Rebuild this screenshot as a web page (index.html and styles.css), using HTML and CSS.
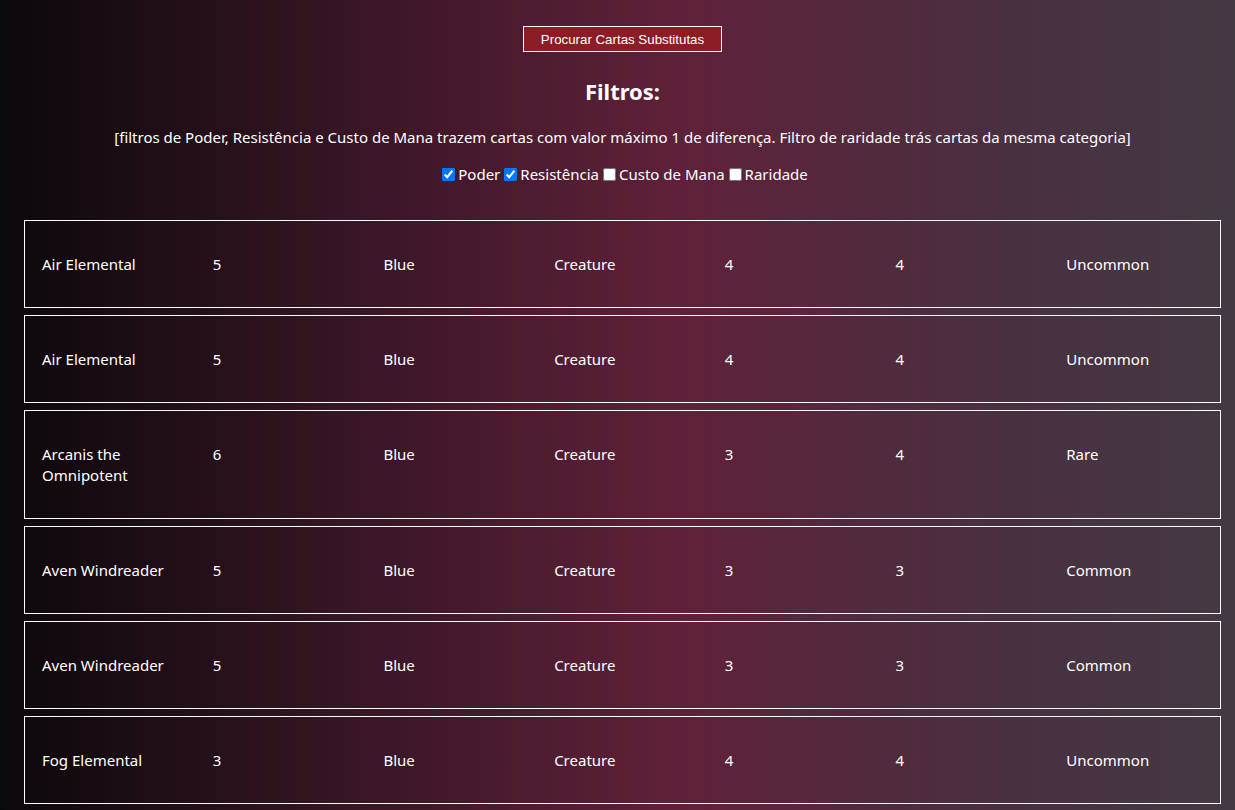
FILE: index.html
```html
<!DOCTYPE html>
<html lang="pt">
<head>
<meta charset="utf-8">
<title>Cartas Substitutas</title>
<link rel="stylesheet" href="styles.css">
</head>
<body>
<main class="page">
  <div class="actions">
    <button class="search-btn" type="button">Procurar Cartas Substitutas</button>
  </div>
  <h2 class="filters-title">Filtros:</h2>
  <p class="filters-note">[filtros de Poder, Resistência e Custo de Mana trazem cartas com valor máximo 1 de diferença. Filtro de raridade trás cartas da mesma categoria]</p>
  <div class="filters">
    <label><input type="checkbox" checked>Poder</label>
    <label><input type="checkbox" checked>Resistência</label>
    <label><input type="checkbox">Custo de Mana</label>
    <label><input type="checkbox">Raridade</label>
  </div>
  <section class="cards">
    <div class="card-row"><div>Air Elemental</div><div>5</div><div>Blue</div><div>Creature</div><div>4</div><div>4</div><div>Uncommon</div></div>
    <div class="card-row"><div>Air Elemental</div><div>5</div><div>Blue</div><div>Creature</div><div>4</div><div>4</div><div>Uncommon</div></div>
    <div class="card-row"><div>Arcanis the Omnipotent</div><div>6</div><div>Blue</div><div>Creature</div><div>3</div><div>4</div><div>Rare</div></div>
    <div class="card-row"><div>Aven Windreader</div><div>5</div><div>Blue</div><div>Creature</div><div>3</div><div>3</div><div>Common</div></div>
    <div class="card-row"><div>Aven Windreader</div><div>5</div><div>Blue</div><div>Creature</div><div>3</div><div>3</div><div>Common</div></div>
    <div class="card-row"><div>Fog Elemental</div><div>3</div><div>Blue</div><div>Creature</div><div>4</div><div>4</div><div>Uncommon</div></div>
  </section>
</main>
</body>
</html>
```
FILE: styles.css
```css
html, body {
  margin: 0;
  padding: 0;
}
body {
  min-height: 810px;
  background: linear-gradient(90deg, #0b080b 0%, #3a1626 30%, #5f2139 55%, #4a2f40 80%, #433943 100%);
  background-attachment: fixed;
  color: #ffffff;
  font-family: "Noto Sans", "Open Sans", sans-serif;
  font-size: 15px;
}
.page {
  padding: 26px 14px 0 24px;
}
.actions {
  display: flex;
  justify-content: center;
}
.search-btn {
  font-family: "Liberation Sans", Arial, sans-serif;
  font-size: 13.3px;
  color: #ffffff;
  background: #8c1c25;
  border: 1px solid #ffffff;
  padding: 0 17px;
  height: 26px;
}
.filters-title {
  margin: 25px 0 0;
  text-align: center;
  font-size: 22px;
  font-weight: 700;
  line-height: 28px;
}
.filters-note {
  margin: 22px 0 0;
  text-align: center;
  line-height: 20px;
}
.filters {
  margin-top: 17px;
  display: flex;
  justify-content: center;
  gap: 4px;
  line-height: 20px;
  padding-left: 5px;
}
.filters label {
  display: flex;
  align-items: center;
}
.filters input {
  margin: 0 3px 0 0;
  width: 13px;
  height: 13px;
}
.cards {
  margin-top: 36px;
  display: flex;
  flex-direction: column;
  gap: 7px;
}
.card-row {
  border: 1px solid #ffffff;
  display: grid;
  grid-template-columns: repeat(7, 1fr);
  padding: 33px 0 32px;
  line-height: 21px;
}
.card-row > div {
  padding: 0 17px;
}
```
